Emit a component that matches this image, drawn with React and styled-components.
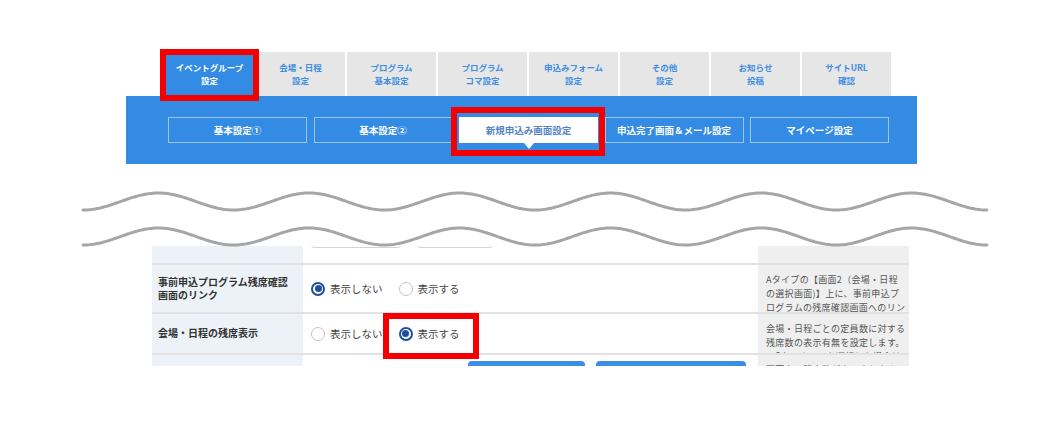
import React from "react";
import styled, { createGlobalStyle, css } from "styled-components";

const GlobalStyle = createGlobalStyle`
  body {
    margin: 0;
    background: #fff;
    font-family: "Noto Sans CJK JP", "Noto Sans", sans-serif;
    color: #333;
  }
`;

const Page = styled.div`
  width: 1060px;
  height: 433px;
  overflow: hidden;
`;

const Header = styled.div`
  width: 791px;
  margin-left: 126px;
  padding-top: 52px;
`;

const Tabs = styled.div`
  display: flex;
  gap: 2px;
  padding-left: 39px;
  height: 44px;
`;

const Mark = styled.div`
  position: relative;
  &::after {
    content: "";
    position: absolute;
    top: ${(p) => p.$t}px;
    right: ${(p) => p.$r}px;
    bottom: ${(p) => p.$b}px;
    left: ${(p) => p.$l}px;
    border: 6px solid #f40000;
    pointer-events: none;
    z-index: 5;
  }
`;

const Tab = styled.div`
  width: 89px;
  height: 44px;
  box-sizing: border-box;
  background: ${(p) => (p.$active ? "#338be4" : "#e6e6e6")};
  color: ${(p) => (p.$active ? "#fff" : "#3e8ee2")};
  display: flex;
  flex-direction: column;
  align-items: center;
  justify-content: center;
  font-size: 8.5px;
  font-weight: bold;
  line-height: 13px;
`;

const Band = styled.div`
  height: 68px;
  background: #338be4;
  display: flex;
  align-items: center;
  gap: 6.5px;
  padding-left: 42px;
`;

const SubButton = styled.div`
  position: relative;
  width: 139px;
  height: 26px;
  box-sizing: border-box;
  border: 1.5px solid rgba(255, 255, 255, 0.5);
  color: #fff;
  display: flex;
  align-items: center;
  justify-content: center;
  font-size: 9.5px;
  font-weight: bold;
  ${(p) =>
    p.$active &&
    css`
      background: #fff;
      border-color: #fff;
      color: #5584c6;
      &::before {
        content: "";
        position: absolute;
        left: 50%;
        bottom: -7px;
        margin-left: -5px;
        border-left: 5px solid transparent;
        border-right: 5px solid transparent;
        border-top: 6px solid #fff;
      }
    `}
`;

const Wave = styled.svg`
  display: block;
  position: relative;
  z-index: 2;
  overflow: visible;
`;

const Table = styled.div`
  width: 757px;
  margin-left: 152px;
`;

const Row = styled.div`
  display: grid;
  grid-template-columns: 151px 455px 151px;
  height: ${(p) => p.$h}px;
  box-sizing: border-box;
  border-top: ${(p) => (p.$first ? "none" : "2px solid #e2e2e2")};
  overflow: ${(p) => (p.$clip ? "hidden" : "visible")};
`;

const Label = styled.div`
  background: #edf2f9;
  padding-left: 6px;
  display: flex;
  align-items: center;
  font-size: 10px;
  font-weight: bold;
  line-height: 12.5px;
  color: #333;
`;

const Main = styled.div`
  display: flex;
  align-items: center;
  gap: ${(p) => p.$gap ?? 16}px;
  padding-left: ${(p) => p.$pl ?? 8}px;
  background: #fff;
`;

const Note = styled.div`
  background: #efefef;
  padding: 8px 0 0 8px;
  font-size: 9px;
  letter-spacing: 0.3px;
  line-height: 14px;
  color: #555;
  white-space: nowrap;
  overflow: hidden;
`;

const Option = styled.label`
  display: flex;
  align-items: center;
  gap: 5px;
  font-size: 10.5px;
  color: #444;
`;

const Circle = styled.span`
  width: 14px;
  height: 14px;
  box-sizing: border-box;
  border-radius: 50%;
  background: #fff;
  border: ${(p) => (p.$on ? "2px solid #1d4f9e" : "1px solid #c4c4c4")};
  display: flex;
  align-items: center;
  justify-content: center;
  &::after {
    content: "";
    width: 7px;
    height: 7px;
    border-radius: 50%;
    background: ${(p) => (p.$on ? "#1d4f9e" : "transparent")};
  }
`;

const Field = styled.div`
  width: ${(p) => p.$w}px;
  height: 22px;
  margin-top: -20px;
  align-self: flex-start;
  box-sizing: border-box;
  border: 1px solid #d4d4d4;
  border-radius: 3px;
`;

const BlueButton = styled.div`
  width: ${(p) => p.$w}px;
  height: 28px;
  margin-top: 6px;
  align-self: flex-start;
  background: #3a8ee6;
  border-radius: 4px;
`;

const tabs = [
  ["イベントグループ", "設定"],
  ["会場・日程", "設定"],
  ["プログラム", "基本設定"],
  ["プログラム", "コマ設定"],
  ["申込みフォーム", "設定"],
  ["その他", "設定"],
  ["お知らせ", "投稿"],
  ["サイトURL", "確認"],
];

const subs = ["基本設定①", "基本設定②", "新規申込み画面設定", "申込完了画面＆メール設定", "マイページ設定"];

function wavePath(c, a) {
  const x0 = 83;
  const x1 = 987;
  const period = (x1 - x0) / 6;
  let d = "";
  for (let x = x0; x <= x1; x += 2) {
    const y = c + a * Math.cos((2 * Math.PI * (x - x0)) / period) - 164;
    d += (d ? " L" : "M") + x + " " + y.toFixed(2);
  }
  return d;
}

const Radio = ({ on, children }) => (
  <Option>
    <Circle $on={on} />
    {children}
  </Option>
);

export default function App() {
  return (
    <Page>
      <GlobalStyle />
      <Header>
        <Tabs>
          {tabs.map(([a, b], i) =>
            i === 0 ? (
              <Mark key={i} $t={-3} $r={-5} $b={-5} $l={-5}>
                <Tab $active>
                  <span>{a}</span>
                  <span>{b}</span>
                </Tab>
              </Mark>
            ) : (
              <Tab key={i}>
                <span>{a}</span>
                <span>{b}</span>
              </Tab>
            )
          )}
        </Tabs>
        <Band>
          {subs.map((s, i) =>
            i === 2 ? (
              <Mark key={i} $t={-10} $r={-7} $b={-13} $l={-8}>
                <SubButton $active>{s}</SubButton>
              </Mark>
            ) : (
              <SubButton key={i}>{s}</SubButton>
            )
          )}
        </Band>
      </Header>

      <Wave width="1060" height="82" viewBox="0 0 1060 82">
        <path d={wavePath(201.5, 8.5)} fill="none" stroke="#a6a6a6" strokeWidth="3" strokeLinecap="round" />
        <path d={wavePath(236.5, 8.5)} fill="none" stroke="#a6a6a6" strokeWidth="3" strokeLinecap="round" />
      </Wave>

      <Table>
        <Row $h={17} $first $clip>
          <Label />
          <Main>
            <Field $w={90} />
            <Field $w={76} />
          </Main>
          <Note />
        </Row>
        <Row $h={49}>
          <Label>
            事前申込プログラム残席確認
            <br />
            画面のリンク
          </Label>
          <Main>
            <Radio on>表示しない</Radio>
            <Radio>表示する</Radio>
          </Main>
          <Note>
            Aタイプの【画面2（会場・日程
            <br />
            の選択画面)】上に、事前申込プ
            <br />
            ログラムの残席確認画面へのリン
            <br />
            クを表示するか設定します。
          </Note>
        </Row>
        <Row $h={41}>
          <Label>会場・日程の残席表示</Label>
          <Main>
            <Radio>表示しない</Radio>
            <Mark $t={-13} $r={-19} $b={-18} $l={-16}>
              <Radio on>表示する</Radio>
            </Mark>
          </Main>
          <Note>
            会場・日程ごとの定員数に対する
            <br />
            残席数の表示有無を設定します。
            <br />
            ・「表示する」を選択した場合は
          </Note>
        </Row>
        <Row $h={13} $clip>
          <Label />
          <Main $pl={165} $gap={11}>
            <BlueButton $w={117} />
            <BlueButton $w={150} />
          </Main>
          <Note>画面上に残席数が表示されます。</Note>
        </Row>
      </Table>
    </Page>
  );
}
